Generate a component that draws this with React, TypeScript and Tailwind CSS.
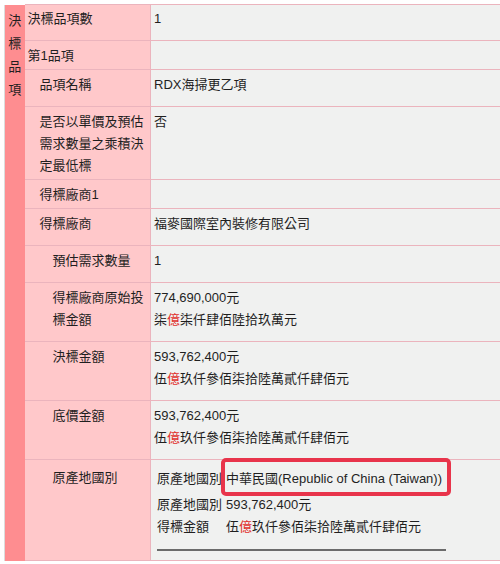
import React from 'react'

type Row = {
  label: string
  indent: 0 | 1 | 2
  value?: React.ReactNode
}

const Yi = () => <span className="text-[#e0302c]">億</span>

const rows: Row[] = [
  { label: '決標品項數', indent: 0, value: '1' },
  { label: '第1品項', indent: 0 },
  { label: '品項名稱', indent: 1, value: 'RDX海掃更乙項' },
  { label: '是否以單價及預估需求數量之乘積決定最低標', indent: 1, value: '否' },
  { label: '得標廠商1', indent: 1 },
  { label: '得標廠商', indent: 1, value: '福麥國際室內裝修有限公司' },
  { label: '預估需求數量', indent: 2, value: '1' },
  {
    label: '得標廠商原始投標金額',
    indent: 2,
    value: (
      <>
        <div>774,690,000元</div>
        <div>柒<Yi />柒仟肆佰陸拾玖萬元</div>
      </>
    ),
  },
  {
    label: '決標金額',
    indent: 2,
    value: (
      <>
        <div>593,762,400元</div>
        <div>伍<Yi />玖仟參佰柒拾陸萬貳仟肆佰元</div>
      </>
    ),
  },
  {
    label: '底價金額',
    indent: 2,
    value: (
      <>
        <div>593,762,400元</div>
        <div>伍<Yi />玖仟參佰柒拾陸萬貳仟肆佰元</div>
      </>
    ),
  },
]

const indentClass = ['pl-[3px]', 'pl-[15px]', 'pl-[28px]']

function OriginCell() {
  return (
    <div className="pl-[3px]">
      <div className="grid grid-cols-[69px_1fr]">
        <div className="leading-[30px]">原產地國別</div>
        <div className="leading-[30px]">
          <span className="relative inline-block">
            中華民國(Republic of China (Taiwan))
            <span className="absolute -top-[6px] -bottom-[2px] -left-[5px] -right-[9px] rounded-[5px] border-4 border-[#e8344b]" />
          </span>
        </div>
        <div>原產地國別</div>
        <div>593,762,400元</div>
        <div>得標金額</div>
        <div>伍<Yi />玖仟參佰柒拾陸萬貳仟肆佰元</div>
      </div>
      <div className="mt-[11px] h-[2px] w-[289px] bg-[#6b6b6b]" />
    </div>
  )
}

export default function App() {
  return (
    <div className="min-h-[564px] overflow-hidden bg-white pt-[4px] pl-[4px] font-['Liberation_Sans','Noto_Sans_CJK_TC',sans-serif] text-[13px] leading-[22px] text-[#1f1f1f]">
      <table className="w-[520px] table-fixed border-collapse border-l border-[#dcdcdc]">
        <colgroup>
          <col className="w-[20px]" />
          <col className="w-[126px]" />
          <col />
        </colgroup>
        <tbody>
          <tr>
            <td
              rowSpan={11}
              className="bg-[#fe8d90] pt-[4px] text-center align-top leading-[23px]"
            >
              決<br />標<br />品<br />項
            </td>
            <td className={`border-t border-b border-r border-[#ebb4bd] bg-[#ffc8ca] pt-[3px] pb-[2px] pr-[5px] align-top ${indentClass[0]}`}>
              {rows[0].label}
            </td>
            <td className="border-t border-b border-[#ebb4bd] bg-[#f0f1f0] pt-[3px] pb-[10px] pl-[3px] align-top">
              {rows[0].value}
            </td>
          </tr>
          {rows.slice(1).map((row, i) => (
            <tr key={i}>
              <td className={`border-b border-r border-[#ebb4bd] bg-[#ffc8ca] pt-[4px] pb-[2px] pr-[5px] align-top ${indentClass[row.indent]}`}>
                {row.label}
              </td>
              <td className="border-b border-[#ebb4bd] bg-[#f0f1f0] pt-[4px] pb-[10px] pl-[3px] align-top">
                {row.value}
              </td>
            </tr>
          ))}
          <tr>
            <td className={`border-b border-r border-[#ebb4bd] bg-[#ffc8ca] pt-[7px] pb-[2px] pr-[5px] align-top ${indentClass[2]}`}>
              原產地國別
            </td>
            <td className="border-b border-[#ebb4bd] bg-[#f0f1f0] pt-[4px] pb-[9px] pl-[3px] align-top">
              <OriginCell />
            </td>
          </tr>
        </tbody>
      </table>
    </div>
  )
}
